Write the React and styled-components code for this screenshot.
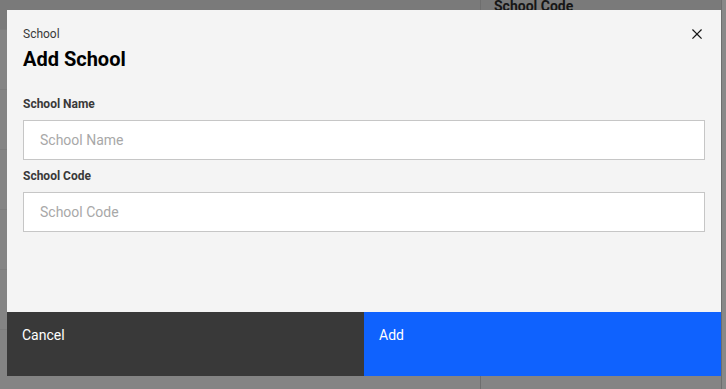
import React from 'react';
import styled, { createGlobalStyle } from 'styled-components';

const GlobalStyle = createGlobalStyle`
  html, body {
    margin: 0;
    padding: 0;
  }
  body {
    width: 726px;
    height: 389px;
    overflow: hidden;
    background: #f4f4f4;
    font-family: Roboto, "Noto Sans", Arial, sans-serif;
  }
`;

const Page = styled.div`
  position: relative;
  width: 726px;
  height: 389px;
  overflow: hidden;
  display: flex;
  background: #f4f4f4;
`;

// page under the dialog is scrolled a little, so the table header is cut at the top
const Table = styled.div`
  flex: 1;
  margin-top: -20px;
  display: grid;
  grid-template-columns: 481px 1fr;
  grid-template-rows: 50px;
  grid-auto-rows: 60px;
`;

const Cell = styled.div`
  box-sizing: border-box;
  border-bottom: 1px solid #e4e4e4;
  border-right: ${p => (p.$first ? '1px solid #c6c6c6' : 'none')};
  background: ${p => (p.$head ? '#dedede' : '#f2f2f2')};
  padding: 17px 13px 0;
  font-size: 14px;
  line-height: 18px;
  font-weight: 700;
  color: #161616;
`;

const Scrollbar = styled.div`
  flex: 0 0 4px;
  border-left: 1px solid #c6c6c6;
  background: #fafafa;
`;

const Overlay = styled.div`
  position: absolute;
  inset: 0;
  background: rgba(22, 22, 22, 0.5);
  display: flex;
  align-items: flex-start;
  padding: 10px 0 0 7px;
`;

const Modal = styled.div`
  position: relative;
  width: 714px;
  height: 366px;
  background: #f4f4f4;
  display: flex;
  flex-direction: column;
`;

const Header = styled.div`
  padding: 16px 16px 0;
`;

const Eyebrow = styled.div`
  font-size: 12px;
  line-height: 16px;
  color: #393939;
  margin-bottom: 3px;
`;

const Title = styled.h2`
  margin: 0;
  font-size: 20px;
  line-height: 28px;
  font-weight: 700;
  color: #000;
`;

const CloseButton = styled.button`
  position: absolute;
  top: 0;
  right: 0;
  width: 48px;
  height: 48px;
  padding: 0;
  border: none;
  background: transparent;
  display: flex;
  align-items: center;
  justify-content: center;
  color: #161616;
  cursor: pointer;
`;

const Body = styled.div`
  padding: 23px 16px 0;
  display: flex;
  flex-direction: column;
`;

const Field = styled.div`
  display: flex;
  flex-direction: column;
  margin-bottom: 8px;
`;

const Label = styled.label`
  font-size: 12px;
  line-height: 16px;
  font-weight: 700;
  color: #393939;
  margin-bottom: 8px;
`;

const Input = styled.input`
  box-sizing: border-box;
  height: 40px;
  width: 100%;
  padding: 0 16px;
  border: 1px solid #c6c6c6;
  background: #fff;
  font-family: inherit;
  font-size: 14px;
  color: #161616;
  outline: none;
  &::placeholder {
    color: #a8a8a8;
  }
`;

const Footer = styled.div`
  margin-top: auto;
  height: 64px;
  display: grid;
  grid-template-columns: 1fr 1fr;
`;

const FooterButton = styled.button`
  border: none;
  margin: 0;
  padding: 14px 15px;
  text-align: left;
  display: flex;
  align-items: flex-start;
  font-family: inherit;
  font-size: 14px;
  line-height: 18px;
  color: #fff;
  background: ${p => (p.$primary ? '#0f62fe' : '#393939')};
  cursor: pointer;
`;

const CloseIcon = () => (
  <svg width="20" height="20" viewBox="0 0 32 32" fill="currentColor">
    <path d="M24 9.4L22.6 8 16 14.6 9.4 8 8 9.4l6.6 6.6L8 22.6 9.4 24l6.6-6.6 6.6 6.6 1.4-1.4-6.6-6.6L24 9.4z" />
  </svg>
);

const rows = [0, 1, 2, 3, 4, 5];

export default function App() {
  return (
    <>
      <GlobalStyle />
      <Page>
        <Table>
          <Cell $head $first />
          <Cell $head>School Code</Cell>
          {rows.map(r => (
            <React.Fragment key={r}>
              <Cell $first />
              <Cell />
            </React.Fragment>
          ))}
        </Table>
        <Scrollbar />
        <Overlay>
          <Modal role="dialog">
            <Header>
              <Eyebrow>School</Eyebrow>
              <Title>Add School</Title>
            </Header>
            <CloseButton aria-label="Close">
              <CloseIcon />
            </CloseButton>
            <Body>
              <Field>
                <Label>School Name</Label>
                <Input placeholder="School Name" />
              </Field>
              <Field>
                <Label>School Code</Label>
                <Input placeholder="School Code" />
              </Field>
            </Body>
            <Footer>
              <FooterButton>Cancel</FooterButton>
              <FooterButton $primary>Add</FooterButton>
            </Footer>
          </Modal>
        </Overlay>
      </Page>
    </>
  );
}
